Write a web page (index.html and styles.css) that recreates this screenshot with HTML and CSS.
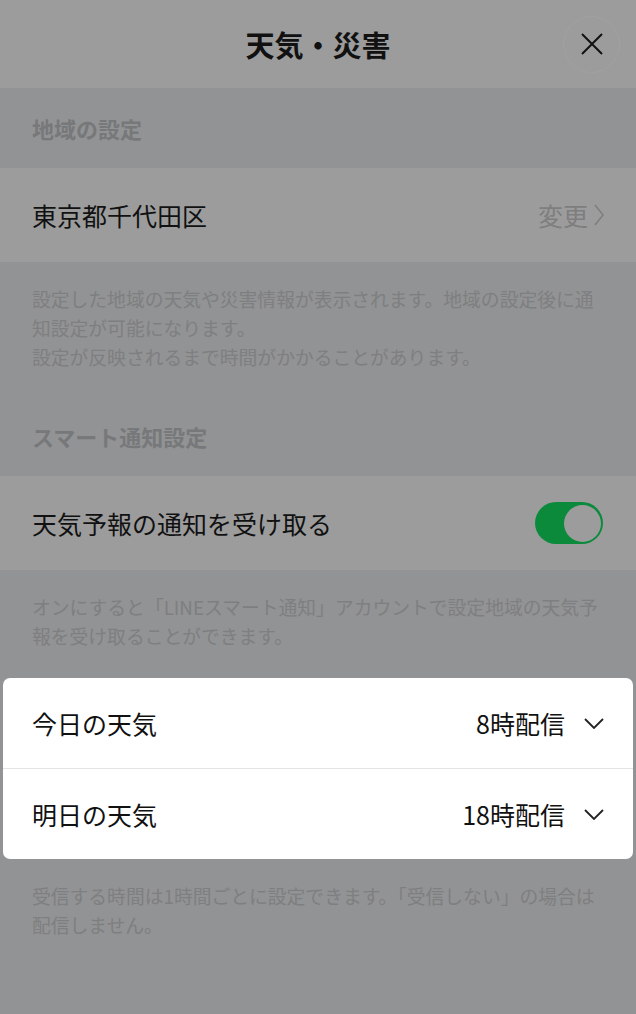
FILE: index.html
```html
<!DOCTYPE html>
<html lang="ja">
<head>
  <meta charset="UTF-8" />
  <meta name="viewport" content="width=device-width, initial-scale=1.0"/>
  <title>天気・災害</title>
  <link rel="stylesheet" href="styles.css">
</head>
<body>
  <div class="header">
    <div></div>
    <div class="title">天気・災害</div>
    <button class="close" type="button" aria-label="閉じる">
      <svg width="22" height="22" viewBox="0 0 22 22">
        <path d="M1 1 L21 21 M21 1 L1 21" stroke="#111" stroke-width="2" fill="none"/>
      </svg>
    </button>
  </div>

  <div class="section-head">地域の設定</div>
  <div class="row">
    <div class="row-label">東京都千代田区</div>
    <div class="row-link">
      変更
      <svg width="10" height="22" viewBox="0 0 10 22">
        <path d="M1 1 L9 11 L1 21" stroke="#7e7e7e" stroke-width="1.5" fill="none"/>
      </svg>
    </div>
  </div>
  <div class="note">
    設定した地域の天気や災害情報が表示されます。地域の設定後に通知設定が可能になります。<br>
    設定が反映されるまで時間がかかることがあります。
  </div>

  <div class="section-head">スマート通知設定</div>
  <div class="row">
    <div class="row-label">天気予報の通知を受け取る</div>
    <div class="toggle on"><div class="knob"></div></div>
  </div>
  <div class="note">
    オンにすると「LINEスマート通知」アカウントで設定地域の天気予報を受け取ることができます。
  </div>

  <div class="card">
    <div class="card-row">
      <div class="row-label">今日の天気</div>
      <div class="select">
        8時配信
        <svg width="20" height="11" viewBox="0 0 20 11">
          <path d="M1 1 L10 10 L19 1" stroke="#222" stroke-width="1.8" fill="none"/>
        </svg>
      </div>
    </div>
    <div class="card-row">
      <div class="row-label">明日の天気</div>
      <div class="select">
        18時配信
        <svg width="20" height="11" viewBox="0 0 20 11">
          <path d="M1 1 L10 10 L19 1" stroke="#222" stroke-width="1.8" fill="none"/>
        </svg>
      </div>
    </div>
  </div>
  <div class="note">
    受信する時間は1時間ごとに設定できます。「受信しない」の場合は配信しません。
  </div>
</body>
</html>
```

FILE: styles.css
```css
html, body {
  margin: 0;
  padding: 0;
}

body {
  font-family: "Noto Sans CJK JP", "Noto Sans", sans-serif;
  background-color: #929394;
  color: #111;
  min-height: 1014px;
}

.header {
  display: grid;
  grid-template-columns: 1fr auto 1fr;
  align-items: center;
  height: 88px;
  background-color: #9c9c9c;
}

.title {
  font-size: 29px;
  font-weight: bold;
  line-height: 1;
}

.close {
  justify-self: end;
  margin-right: 16px;
  width: 57px;
  height: 57px;
  border-radius: 50%;
  border: 1px solid #a1a1a1;
  background-color: #9c9c9c;
  display: flex;
  align-items: center;
  justify-content: center;
  padding: 0;
}

.section-head {
  height: 80px;
  display: flex;
  align-items: center;
  padding: 0 32px;
  font-size: 22px;
  font-weight: bold;
  color: #77787a;
}

.row {
  height: 94px;
  display: flex;
  align-items: center;
  justify-content: space-between;
  padding: 0 32px;
  background-color: #9c9c9c;
}

.row-label {
  font-size: 25px;
}

.row-link {
  display: flex;
  align-items: center;
  gap: 6px;
  font-size: 25px;
  color: #7e7e7e;
}

.toggle {
  width: 68px;
  height: 42px;
  box-sizing: border-box;
  border-radius: 21px;
  background-color: #0b8a3c;
  padding: 2.5px;
  display: flex;
  justify-content: flex-end;
  margin-right: 1px;
}

.knob {
  width: 37px;
  height: 37px;
  border-radius: 50%;
  background-color: #9c9c9c;
}

.note {
  padding: 22px 32px 25px;
  font-size: 18.8px;
  line-height: 29px;
  color: #7e7f80;
}

.card {
  margin: 3px 3px 0;
  background-color: #fff;
  border-radius: 7px;
}

.card-row {
  height: 90px;
  display: flex;
  align-items: center;
  justify-content: space-between;
  padding: 0 29px;
}

.card-row + .card-row {
  border-top: 1px solid #e4e4e4;
}

.select {
  display: flex;
  align-items: center;
  gap: 19px;
  font-size: 25px;
}
```
